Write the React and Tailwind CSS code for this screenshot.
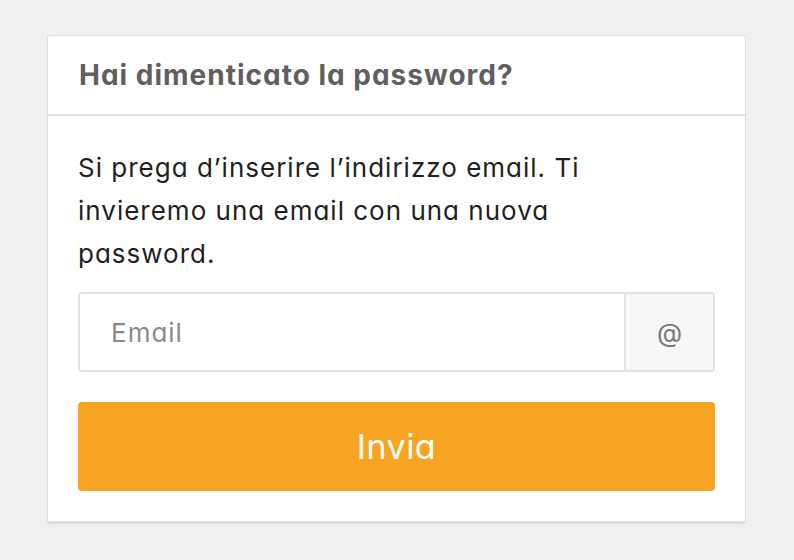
export default function App() {
  return (
    <div
      className="min-h-[560px] bg-[#f0f0f0] pt-[35px] pl-[47px] [font-feature-settings:'cv11']"
      style={{ fontFamily: "Inter, 'Open Sans', sans-serif" }}
    >
      <div className="w-[699px] bg-white border border-[#dedede] border-b-[3px] rounded-[3px]">
        <div className="h-[80px] flex items-center px-[31px] border-b-2 border-[#e2e2e2]">
          <h2 className="text-[28px] font-bold text-[#5f5f5f] leading-none tracking-[1px]">
            Hai dimenticato la password?
          </h2>
        </div>
        <div className="px-[30px] pt-[30px] pb-[30px]">
          <p className="text-[26px] leading-[43px] text-[#1f1f1f] tracking-[1px]">
            Si prega d’inserire l’indirizzo email. Ti
            <br />
            invieremo una email con una nuova
            <br />
            password.
          </p>
          <div className="mt-[17px] flex h-[80px] border-2 border-[#e2e2e2] rounded-[4px] overflow-hidden">
            <input
              type="email"
              placeholder="Email"
              className="flex-1 min-w-0 px-[31px] text-[26px] tracking-[1px] text-[#333] placeholder:text-[#8a8a8a] outline-none bg-white"
            />
            <div className="w-[89px] flex items-center justify-center bg-[#f7f7f7] border-l-2 border-[#e2e2e2] text-[26px] text-[#777]">
              @
            </div>
          </div>
          <button className="mt-[30px] w-full h-[89px] bg-[#f8a423] rounded-[4px] text-white text-[34px] tracking-[0.5px]">
            Invia
          </button>
        </div>
      </div>
    </div>
  );
}
